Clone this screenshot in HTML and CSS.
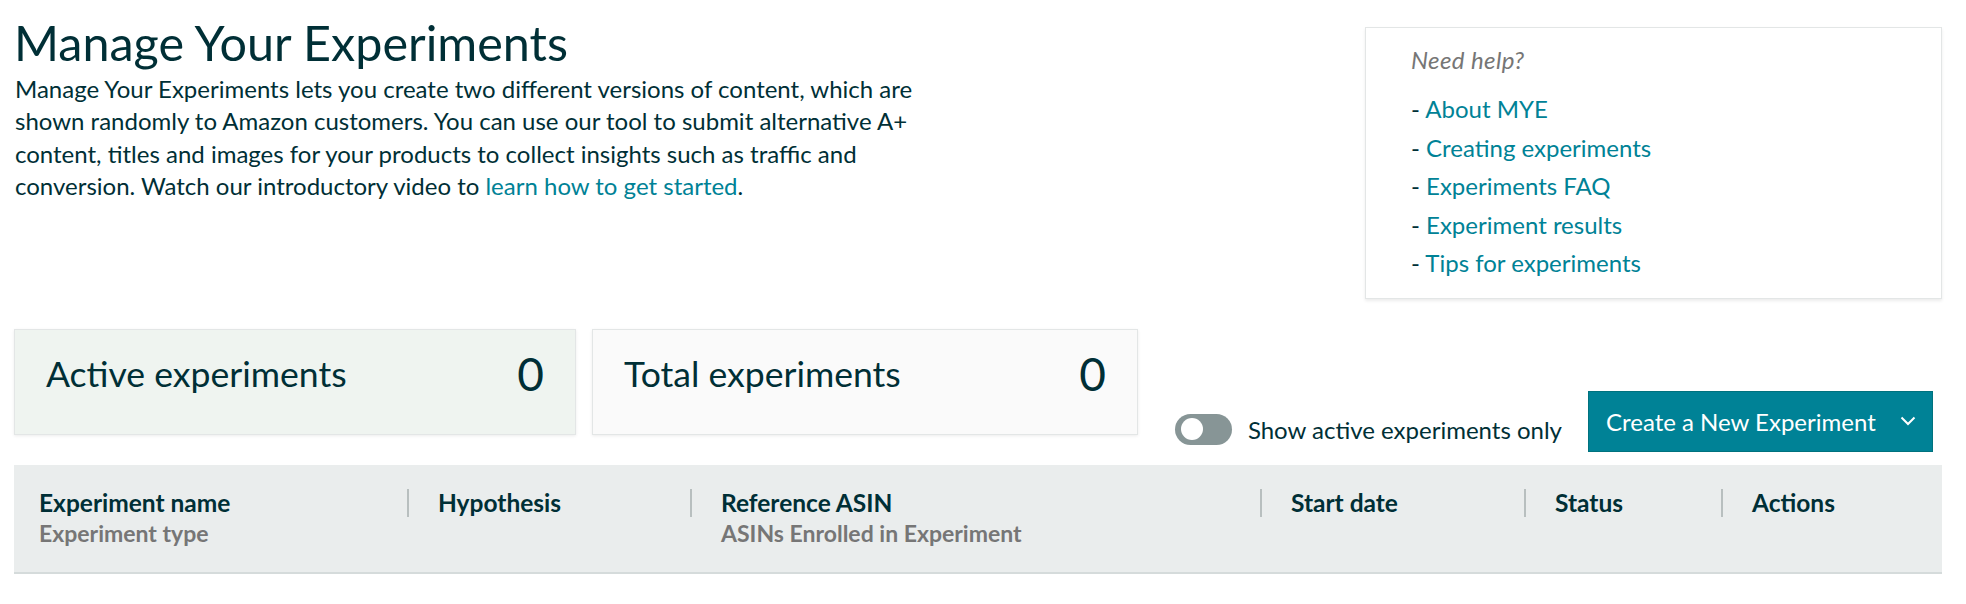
FILE: index.html
```html
<!DOCTYPE html>
<html lang="en">
<head>
<meta charset="utf-8">
<title>Manage Your Experiments</title>
<link rel="stylesheet" href="styles.css">
</head>
<body>
<div class="page">
  <div class="top">
    <div class="intro">
      <h1 class="title">Manage Your Experiments</h1>
      <p class="lead">Manage Your Experiments lets you create two different versions of content, which are<br>shown randomly to Amazon customers. You can use our tool to submit alternative A+<br>content, titles and images for your products to collect insights such as traffic and<br>conversion. Watch our introductory video to <a class="link" href="#">learn how to get started</a>.</p>
    </div>
    <aside class="help">
      <p class="help-title">Need help?</p>
      <ul class="help-list">
        <li>- <a class="link" href="#">About MYE</a></li>
        <li>- <a class="link" href="#">Creating experiments</a></li>
        <li>- <a class="link" href="#">Experiments FAQ</a></li>
        <li>- <a class="link" href="#">Experiment results</a></li>
        <li>- <a class="link" href="#">Tips for experiments</a></li>
      </ul>
    </aside>
  </div>

  <div class="stats-row">
    <div class="cards">
      <div class="card card--active"><span class="card-label">Active experiments</span><span class="card-num">0</span></div>
      <div class="card card--total"><span class="card-label">Total experiments</span><span class="card-num">0</span></div>
    </div>
    <div class="controls">
      <label class="toggle-wrap"><span class="toggle"><span class="knob"></span></span><span class="toggle-text">Show active experiments only</span></label>
      <button class="btn" type="button"><span>Create a New Experiment</span><svg class="chev" width="16" height="10" viewBox="0 0 16 10"><polyline points="1.5,1.5 8,8 14.5,1.5" fill="none" stroke="#fff" stroke-width="2"/></svg></button>
    </div>
  </div>

  <div class="thead">
    <div class="th th--first"><div class="th-title">Experiment name</div><div class="th-sub">Experiment type</div></div>
    <div class="th"><div class="th-title">Hypothesis</div></div>
    <div class="th"><div class="th-title">Reference ASIN</div><div class="th-sub">ASINs Enrolled in Experiment</div></div>
    <div class="th"><div class="th-title">Start date</div></div>
    <div class="th"><div class="th-title">Status</div></div>
    <div class="th"><div class="th-title">Actions</div></div>
  </div>
</div>
</body>
</html>
```

FILE: styles.css
```css
* { box-sizing: border-box; }
body {
  margin: 0;
  background: #fff;
  color: #002f36;
  font-family: Lato, "Liberation Sans", sans-serif;
}
.page { padding: 12px 24px 0 14px; }
.top { display: flex; justify-content: space-between; align-items: flex-start; }
.title { margin: 0; font-size: 48.5px; line-height: 60px; font-weight: 400; }
.lead { margin: 1px 0 0 1px; font-size: 24px; line-height: 32.3px; }
.link { color: #008296; text-decoration: none; }
.help {
  width: 577px; margin-top: 15px; border: 1px solid #e3e6e6;
  box-shadow: 0 2px 3px rgba(0,0,0,0.08);
  padding: 18px 20px 15px 45px;
}
.help-title { margin: 0; font-size: 24px; line-height: 28px; font-style: italic; color: #767676; letter-spacing: 0.4px; }
.help-list { list-style: none; margin: 16px 0 0; padding: 0; font-size: 24px; line-height: 38.5px; }
.stats-row { display: flex; align-items: flex-start; margin-top: 30px; }
.cards { display: flex; gap: 16px; }
.card {
  display: flex; align-items: center; justify-content: space-between;
  height: 106px; padding: 0 31px 16px 31px;
  border: 1px solid #e3e6e6; box-shadow: 0 1px 3px rgba(0,0,0,0.08);
}
.card--active { width: 562px; background: #eff4f0; }
.card--total { width: 546px; background: #fafafa; }
.card-label { font-size: 35.6px; }
.card-num { font-size: 46px; line-height: 55px; }
.controls { margin-left: auto; margin-right: 9px; margin-top: 62px; display: flex; align-items: flex-end; }
.toggle-wrap { display: flex; align-items: center; gap: 16px; margin-bottom: 7px; margin-right: 26px; }
.toggle { width: 57px; height: 31px; border-radius: 16px; background: #879596; display: flex; align-items: center; padding-left: 6px; }
.knob { width: 22px; height: 22px; border-radius: 50%; background: #fff; }
.toggle-text { font-size: 24px; line-height: 31px; }
.btn {
  height: 61px; width: 345px; display: flex; align-items: center; justify-content: space-between;
  padding: 0 16px 0 17px; background: #008296; border: 1px solid #00727e; color: #fff;
  font-family: inherit; font-size: 24px;
}
.thead {
  margin-top: 13px; display: grid;
  grid-template-columns: 393px 283px 570px 264px 197px 1fr;
  background: #eaeded; border-bottom: 2px solid #d5dbdb;
  height: 109px; padding-top: 24px;
}
.th { padding-left: 31px; font-weight: 700; }
.th-title { margin-left: -31px; padding-left: 29px; border-left: 2px solid #b8bfbf; font-size: 24.5px; line-height: 28px; }
.th--first { padding-left: 25px; }
.th--first .th-title { margin-left: 0; padding-left: 0; border-left: 0; }
.th-sub { font-size: 23px; line-height: 32px; color: #767676; }
```
